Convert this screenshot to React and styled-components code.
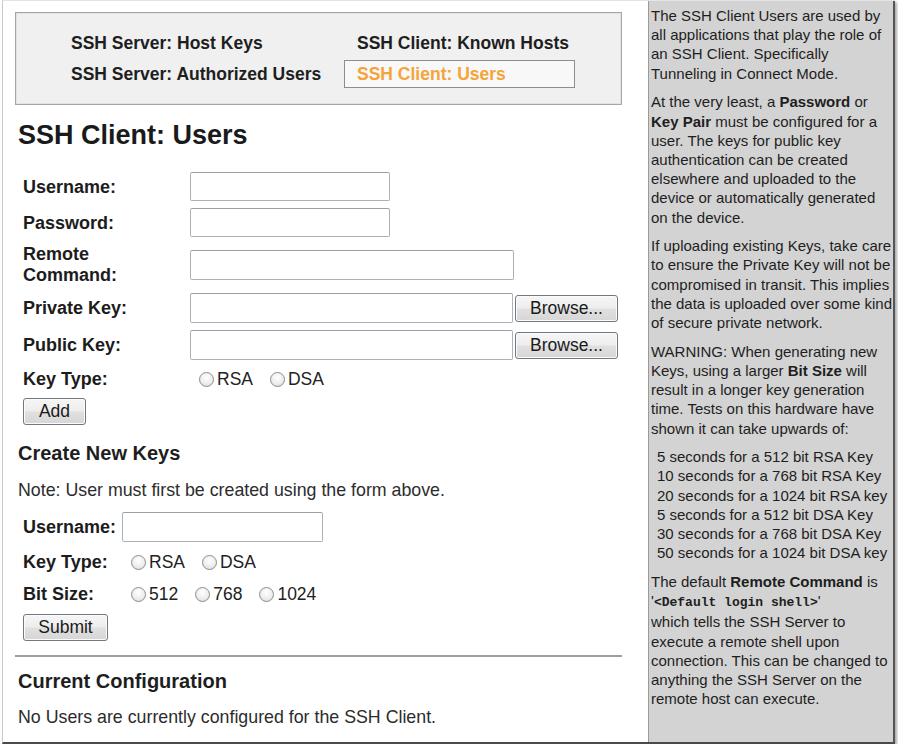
import React from "react";
import styled, { createGlobalStyle } from "styled-components";

const Global = createGlobalStyle`
  *, *::before, *::after { box-sizing: border-box; }
  html, body { margin: 0; padding: 0; background: #ffffff; }
  body {
    font-family: "Liberation Sans", Arial, sans-serif;
    color: #1c1c1c;
    overflow: hidden;
  }
`;

const Frame = styled.div`
  display: flex;
  margin-left: 2px;
  width: 893px;
  height: 744px;
  border-left: 1px solid #c9c9c9;
  border-top: 1px solid #e4e4e4;
  border-bottom: 2px solid #4a4a4a;
  box-shadow: 2px 2px 3px rgba(0, 0, 0, 0.35);
`;

const Main = styled.main`
  flex: 0 0 645px;
  padding: 0 26px 0 12px;
  overflow: hidden;
  background: #ffffff;
`;

const Nav = styled.nav`
  display: grid;
  grid-template-columns: 286px 231px;
  grid-auto-rows: 28px;
  row-gap: 3px;
  margin-top: 11px;
  padding: 16px 0 16px 42px;
  background: #f0f0f0;
  border: 1px solid #a6a6a6;
  box-shadow: inset 0 0 0 1px #e2e2e2;
`;

const NavLink = styled.a`
  display: flex;
  align-items: center;
  padding: 0 12px;
  font-size: 17.5px;
  font-weight: bold;
  white-space: nowrap;
  text-decoration: none;
  color: ${(p) => (p.$active ? "#f5a43a" : "#1e1e1e")};
  border: 1px solid ${(p) => (p.$active ? "#8d8d8d" : "transparent")};
  background: ${(p) => (p.$active ? "#f8f8f8" : "transparent")};
`;

const Title = styled.h1`
  margin: 14px 0 0 3px;
  font-size: 27px;
  line-height: 32px;
  font-weight: bold;
  color: #1a1a1a;
`;

const Form = styled.form`
  display: flex;
  flex-direction: column;
  align-items: flex-start;
  gap: ${(p) => p.$gap}px;
  margin-top: ${(p) => p.$top}px;
  padding-left: 8px;
`;

const Row = styled.div`
  display: flex;
  align-items: center;
  min-height: ${(p) => p.$h || 0}px;
`;

const Label = styled.label`
  width: ${(p) => p.$w}px;
  margin-right: ${(p) => p.$mr || 0}px;
  flex: 0 0 auto;
  font-size: 18px;
  line-height: ${(p) => p.$lh || 22}px;
  font-weight: bold;
  color: #1c1c1c;
`;

const TextInput = styled.input`
  width: ${(p) => p.$w}px;
  height: ${(p) => p.$h}px;
  margin: 0;
  padding: 2px 4px;
  border: 1px solid #abb1b8;
  border-top-color: #9aa0a8;
  border-radius: 2px;
  background: #ffffff;
  font: 16px "Liberation Sans", Arial, sans-serif;
`;

const Button = styled.button`
  width: ${(p) => p.$w}px;
  height: 27px;
  margin: 0 0 0 ${(p) => p.$ml || 0}px;
  padding: 0;
  font: 17.5px "Liberation Sans", Arial, sans-serif;
  color: #1a1a1a;
  border: 1px solid #707982;
  border-radius: 3px;
  background: linear-gradient(#f6f6f6 0%, #ededed 48%, #e0e0e0 52%, #d6d6d6 100%);
  box-shadow: inset 0 0 0 1px #fbfbfb;
`;

const Options = styled.div`
  display: flex;
  align-items: center;
  gap: 17px;
  margin-left: 9px;
`;

const Option = styled.label`
  display: inline-flex;
  align-items: center;
  gap: 3px;
  font-size: 17.5px;
  color: #222222;
`;

const Radio = styled.input.attrs({ type: "radio" })`
  appearance: none;
  -webkit-appearance: none;
  margin: 0;
  width: 15px;
  height: 15px;
  border-radius: 50%;
  border: 1px solid #8c8c8c;
  background: radial-gradient(circle at 50% 35%, #ffffff 0%, #ececec 60%, #d4d4d4 100%);
`;

const SubHeading = styled.h2`
  margin: ${(p) => p.$top}px 0 0 3px;
  font-size: 20px;
  line-height: 24px;
  font-weight: bold;
  color: #1e1e1e;
`;

const Note = styled.p`
  margin: ${(p) => p.$top}px 0 0 3px;
  font-size: 17.8px;
  line-height: 22px;
  color: #2c2c2c;
  white-space: nowrap;
`;

const Rule = styled.hr`
  margin: 14px 0 0 0;
  height: 2px;
  border: none;
  background: #9e9e9e;
`;

const Sidebar = styled.aside`
  flex: 1 1 auto;
  padding: 5px 0 0 2px;
  background: #d3d3d3;
  border-left: 1px solid #9a9a9a;
  border-right: 2px solid #555555;
  font-size: 15px;
  line-height: 19.2px;
  color: #1e1e1e;
  white-space: nowrap;
  overflow: hidden;
`;

const Para = styled.p`
  margin: 0 0 9.5px 0;
`;

const TimeList = styled.div`
  margin: 0 0 9.5px 0;
  padding-left: 6px;
`;

const Code = styled.code`
  font-family: "Liberation Mono", "Courier New", monospace;
  font-size: 13px;
  font-weight: bold;
`;

function RadioGroup({ name, values }) {
  return (
    <Options>
      {values.map((v) => (
        <Option key={v}>
          <Radio name={name} value={v} />
          {v}
        </Option>
      ))}
    </Options>
  );
}

export default function App() {
  return (
    <>
      <Global />
      <Frame>
        <Main>
          <Nav>
            <NavLink>SSH Server: Host Keys</NavLink>
            <NavLink>SSH Client: Known Hosts</NavLink>
            <NavLink>SSH Server: Authorized Users</NavLink>
            <NavLink $active>SSH Client: Users</NavLink>
          </Nav>

          <Title>SSH Client: Users</Title>

          <Form $gap={7} $top={21}>
            <Row>
              <Label $w={167}>Username:</Label>
              <TextInput $w={200} $h={29} />
            </Row>
            <Row>
              <Label $w={167}>Password:</Label>
              <TextInput type="password" $w={200} $h={29} />
            </Row>
            <Row>
              <Label $w={160} $mr={7} $lh={21}>Remote Command:</Label>
              <TextInput $w={324} $h={30} />
            </Row>
            <Row>
              <Label $w={167}>Private Key:</Label>
              <TextInput $w={323} $h={30} />
              <Button type="button" $w={103} $ml={2}>Browse...</Button>
            </Row>
            <Row>
              <Label $w={167}>Public Key:</Label>
              <TextInput $w={323} $h={30} />
              <Button type="button" $w={103} $ml={2}>Browse...</Button>
            </Row>
            <Row $h={24}>
              <Label $w={167}>Key Type:</Label>
              <RadioGroup name="kt1" values={["RSA", "DSA"]} />
            </Row>
            <Button type="button" $w={63}>Add</Button>
          </Form>

          <SubHeading $top={16}>Create New Keys</SubHeading>
          <Note $top={14}>Note: User must first be created using the form above.</Note>

          <Form $gap={8} $top={11}>
            <Row>
              <Label $w={99}>Username:</Label>
              <TextInput $w={201} $h={30} />
            </Row>
            <Row $h={24}>
              <Label $w={99}>Key Type:</Label>
              <RadioGroup name="kt2" values={["RSA", "DSA"]} />
            </Row>
            <Row $h={24}>
              <Label $w={99}>Bit Size:</Label>
              <RadioGroup name="bits" values={["512", "768", "1024"]} />
            </Row>
            <Button type="button" $w={85}>Submit</Button>
          </Form>

          <Rule />

          <SubHeading $top={12}>Current Configuration</SubHeading>
          <Note $top={13}>No Users are currently configured for the SSH Client.</Note>
        </Main>

        <Sidebar>
          <Para>
            The SSH Client Users are used by<br />
            all applications that play the role of<br />
            an SSH Client. Specifically<br />
            Tunneling in Connect Mode.
          </Para>
          <Para>
            At the very least, a <b>Password</b> or<br />
            <b>Key Pair</b> must be configured for a<br />
            user. The keys for public key<br />
            authentication can be created<br />
            elsewhere and uploaded to the<br />
            device or automatically generated<br />
            on the device.
          </Para>
          <Para>
            If uploading existing Keys, take care<br />
            to ensure the Private Key will not be<br />
            compromised in transit. This implies<br />
            the data is uploaded over some kind<br />
            of secure private network.
          </Para>
          <Para>
            WARNING: When generating new<br />
            Keys, using a larger <b>Bit Size</b> will<br />
            result in a longer key generation<br />
            time. Tests on this hardware have<br />
            shown it can take upwards of:
          </Para>
          <TimeList>
            5 seconds for a 512 bit RSA Key<br />
            10 seconds for a 768 bit RSA Key<br />
            20 seconds for a 1024 bit RSA key<br />
            5 seconds for a 512 bit DSA Key<br />
            30 seconds for a 768 bit DSA Key<br />
            50 seconds for a 1024 bit DSA key
          </TimeList>
          <Para>
            The default <b>Remote Command</b> is<br />
            {"'"}<Code>{"<Default login shell>"}</Code>{"'"}<br />
            which tells the SSH Server to<br />
            execute a remote shell upon<br />
            connection. This can be changed to<br />
            anything the SSH Server on the<br />
            remote host can execute.
          </Para>
        </Sidebar>
      </Frame>
    </>
  );
}
